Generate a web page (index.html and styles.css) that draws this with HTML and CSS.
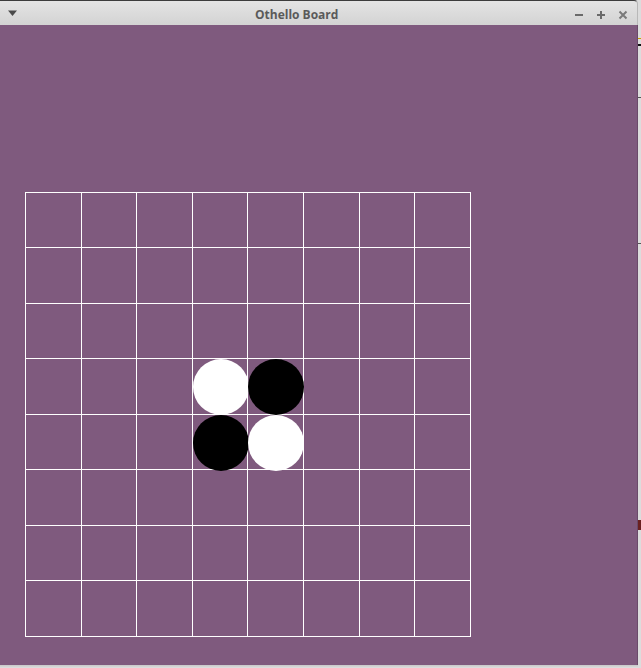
FILE: index.html
```html
<!DOCTYPE html>
<html>
<head>
<meta charset="utf-8">
<link rel="stylesheet" href="styles.css">
</head>
<body>
<div class="desktop">
  <div class="window">
    <div class="titlebar">
      <svg class="menu" width="10" height="7" viewBox="0 0 10 7"><path d="M0 0.5 H9 L4.5 6 Z" fill="#4a4a4a"/></svg>
      <div class="title">Othello Board</div>
      <div class="controls">
        <svg width="10" height="10" viewBox="0 0 10 10"><path d="M1 5 H9" stroke="#6a6a6a" stroke-width="2"/></svg>
        <svg width="10" height="10" viewBox="0 0 10 10"><path d="M1 5 H9 M5 1 V9" stroke="#6a6a6a" stroke-width="2"/></svg>
        <svg width="10" height="10" viewBox="0 0 10 10"><path d="M1.5 1.5 L8.5 8.5 M8.5 1.5 L1.5 8.5" stroke="#7a7a7a" stroke-width="2"/></svg>
      </div>
    </div>
    <div class="content">
      <div class="board" id="board"></div>
    </div>
    <div class="bottom"></div>
  </div>
  <div class="edge">
    <span class="m1"></span><span class="m2"></span><span class="m3"></span><span class="m4"></span><span class="m5"></span>
  </div>
</div>
<script>
  var board = document.getElementById('board');
  var discs = {'3,3':'white','3,4':'black','4,3':'black','4,4':'white'};
  for (var r = 0; r < 8; r++) {
    for (var c = 0; c < 8; c++) {
      var cell = document.createElement('div');
      cell.className = 'cell';
      var k = r + ',' + c;
      if (discs[k]) {
        var d = document.createElement('div');
        d.className = 'disc ' + discs[k];
        cell.appendChild(d);
      }
      board.appendChild(cell);
    }
  }
</script>
</body>
</html>
```

FILE: styles.css
```css
html, body {
  margin: 0;
  padding: 0;
}
body {
  width: 641px;
  height: 668px;
  overflow: hidden;
  background: #d9d9d9;
}
.desktop {
  display: flex;
  width: 641px;
  height: 668px;
}
.window {
  width: 638px;
  height: 668px;
  display: flex;
  flex-direction: column;
  flex: none;
}
.titlebar {
  height: 24px;
  border-top: 1px solid #3c3c3c;
  border-right: 1px solid #b8b8b8;
  border-radius: 0 4px 0 0;
  background: linear-gradient(#e4e4e4, #d3d3d3);
  position: relative;
  display: flex;
  align-items: center;
  box-sizing: content-box;
}
.menu {
  margin-left: 8px;
  margin-top: 1px;
}
.title {
  position: absolute;
  left: 255px;
  top: 7px;
  font-family: "Open Sans", "DejaVu Sans", sans-serif;
  font-weight: 700;
  font-size: 12px;
  line-height: 14px;
  color: #5a5a5a;
}
.controls {
  margin-left: auto;
  margin-right: 9px;
  display: flex;
  gap: 12px;
  margin-top: 3px;
}
.content {
  height: 640px;
  background: #7f5a7e;
  border-right: 1px solid #6a4a6a;
}
.board {
  margin-left: 25px;
  margin-top: 167px;
  width: 445px;
  height: 444px;
  display: grid;
  grid-template-columns: 56px 55px 56px 55px 56px 56px 55px 56px;
  grid-template-rows: 55px 56px 55px 56px 55px 56px 55px 56px;
  border-left: 1px solid #ffffff;
  border-top: 1px solid #ffffff;
  box-sizing: content-box;
}
.cell {
  border-right: 1px solid #ffffff;
  border-bottom: 1px solid #ffffff;
  position: relative;
}
.disc {
  position: absolute;
  left: 0;
  top: 0;
  width: 56px;
  height: 56px;
  border-radius: 50%;
  z-index: 1;
}
.white { background: #ffffff; }
.black { background: #000000; }
.bottom {
  height: 3px;
  background: linear-gradient(#c8c8c8, #e0e0e0);
}
.edge {
  flex: 1;
  position: relative;
  background: #dcdcdc;
}
.edge span {
  position: absolute;
  left: 0;
  width: 3px;
  height: 1px;
  background: #555;
}
.m1 { top: 38px; background: #c9a400 !important; }
.m2 { top: 44px; height: 2px !important; background: #111 !important; }
.m3 { top: 97px; }
.m4 { top: 243px; }
.m5 { top: 520px; height: 10px !important; background: #6a2020 !important; }
```
